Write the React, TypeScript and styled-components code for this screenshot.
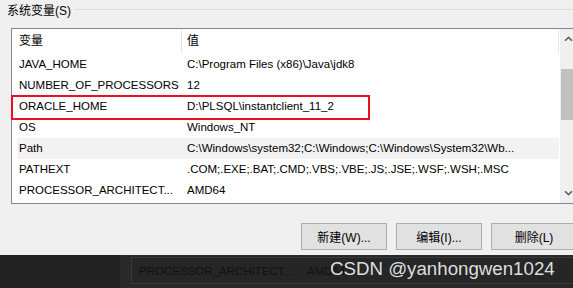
import { FC } from 'react';
import styled, { createGlobalStyle } from 'styled-components';

const GlobalStyle = createGlobalStyle`
  body {
    margin: 0;
    background: #f0f0f0;
  }
`;

interface EnvVar {
  name: string;
  value: string;
  marked?: boolean;
  hot?: boolean;
}

const vars: EnvVar[] = [
  { name: 'JAVA_HOME', value: 'C:\\Program Files (x86)\\Java\\jdk8' },
  { name: 'NUMBER_OF_PROCESSORS', value: '12' },
  { name: 'ORACLE_HOME', value: 'D:\\PLSQL\\instantclient_11_2', marked: true },
  { name: 'OS', value: 'Windows_NT' },
  { name: 'Path', value: 'C:\\Windows\\system32;C:\\Windows;C:\\Windows\\System32\\Wb...', hot: true },
  { name: 'PATHEXT', value: '.COM;.EXE;.BAT;.CMD;.VBS;.VBE;.JS;.JSE;.WSF;.WSH;.MSC' },
  { name: 'PROCESSOR_ARCHITECT...', value: 'AMD64' },
];

const Chevron: FC<{ down?: boolean }> = ({ down }) => (
  <svg width="9" height="6" viewBox="0 0 9 6">
    <polyline
      points={down ? '1,1.2 4.5,4.6 8,1.2' : '1,4.8 4.5,1.4 8,4.8'}
      fill="none"
      stroke="#606060"
      strokeWidth="1.6"
    />
  </svg>
);

const App: FC = () => {
  return (
    <Page>
      <GlobalStyle />
      <GroupTitle>
        <span>系统变量(S)</span>
      </GroupTitle>
      <ListBox>
        <ListContent>
          <HeaderRow>
            <HeaderCell $width={170} $pad={7}>变量</HeaderCell>
            <HeaderCell $width={377} $pad={5}>值</HeaderCell>
          </HeaderRow>
          {vars.map(v => (
            <Row key={v.name} $hot={v.hot} $marked={v.marked}>
              <NameCell>{v.name}</NameCell>
              <ValueCell>{v.value}</ValueCell>
            </Row>
          ))}
        </ListContent>
        <ScrollBar>
          <ArrowButton>
            <Chevron />
          </ArrowButton>
          <Track>
            <Thumb />
          </Track>
          <ArrowButton>
            <Chevron down />
          </ArrowButton>
        </ScrollBar>
      </ListBox>
      <ButtonRow>
        <Button>新建(W)...</Button>
        <Button>编辑(I)...</Button>
        <Button>删除(L)</Button>
      </ButtonRow>
      <Footer>
        <FooterSide />
        <FooterMain>
          <FooterBox>
            <FooterCell $width={169} $pad={7}>PROCESSOR_ARCHITECT...</FooterCell>
            <FooterCell $pad={6}>AMD64</FooterCell>
          </FooterBox>
        </FooterMain>
        <Watermark>CSDN @yanhongwen1024</Watermark>
      </Footer>
    </Page>
  );
};

export default App;

const Page = styled.div`
  position: relative;
  width: 573px;
  height: 288px;
  overflow: hidden;
  display: flex;
  flex-direction: column;
  background: #f0f0f0;
  color: #000;
  font-family: "Liberation Sans", "Noto Sans CJK SC", sans-serif;
  font-size: 11.5px;
`;

const GroupTitle = styled.div`
  display: flex;
  height: 18px;
  margin-top: 2px;
  padding-left: 7px;
  line-height: 18px;
  font-size: 12px;
  gap: 3px;

  &::after {
    content: '';
    flex: 1;
    margin-top: 7px;
    height: 0;
    border-top: 1px solid #dcdcdc;
  }
`;

const ListBox = styled.div`
  display: flex;
  flex-shrink: 0;
  width: 565px;
  height: 174px;
  margin: 8px 0 0 11px;
  border: 1px solid #828790;
  background: #fff;
`;

const ListContent = styled.div`
  width: 548px;
  display: flex;
  flex-direction: column;
`;

const HeaderRow = styled.div`
  display: flex;
  height: 25px;
  padding-top: 1px;
  box-sizing: border-box;
`;

const HeaderCell = styled.div<{ $width: number; $pad: number }>`
  width: ${p => p.$width}px;
  height: 23px;
  line-height: 23px;
  padding-left: ${p => p.$pad}px;
  box-sizing: border-box;
  border-right: 1px solid #e5e5e5;
  font-size: 12px;
`;

const Row = styled.div<{ $hot?: boolean; $marked?: boolean }>`
  position: relative;
  display: flex;
  width: 542px;
  height: 21px;
  margin-left: 5px;
  line-height: 21px;
  white-space: nowrap;
  background: ${p => (p.$hot ? '#f2f2f2' : 'transparent')};

  &::after {
    content: '';
    display: ${p => (p.$marked ? 'block' : 'none')};
    position: absolute;
    left: -6px;
    top: -1px;
    width: 359px;
    height: 25px;
    box-sizing: border-box;
    border: 2px solid #e81123;
  }
`;

const NameCell = styled.div`
  width: 164px;
  padding-left: 2px;
  box-sizing: border-box;
  overflow: hidden;
`;

const ValueCell = styled.div`
  flex: 1;
  padding-left: 6px;
  overflow: hidden;
`;

const ScrollBar = styled.div`
  width: 17px;
  display: flex;
  flex-direction: column;
  background: #f0f0f0;
`;

const ArrowButton = styled.div`
  height: 20px;
  display: flex;
  align-items: center;
  justify-content: center;
`;

const Track = styled.div`
  flex: 1;
  padding: 20px 1px 0 1px;
`;

const Thumb = styled.div`
  height: 51px;
  background: #c1c1c1;
`;

const ButtonRow = styled.div`
  display: flex;
  gap: 9px;
  margin: 19px 0 0 301px;
`;

const Button = styled.div`
  width: 86px;
  height: 27px;
  box-sizing: border-box;
  flex-shrink: 0;
  display: flex;
  align-items: center;
  justify-content: center;
  background: #e1e1e1;
  border: 1px solid #adadad;
  font-size: 12px;
`;

const Footer = styled.div`
  display: flex;
  height: 33px;
  margin-top: auto;
  background: #292929;
`;

const FooterSide = styled.div`
  width: 120px;
  background: #222;
`;

const FooterMain = styled.div`
  flex: 1;
  padding: 2px 0 4px 11px;
`;

const FooterBox = styled.div`
  display: flex;
  height: 100%;
  box-sizing: border-box;
  border: 1px solid #3a3a3a;
  border-right: none;
  align-items: center;
  background: #262626;
`;

const FooterCell = styled.div<{ $width?: number; $pad: number }>`
  width: ${p => (p.$width ? `${p.$width}px` : 'auto')};
  padding-left: ${p => p.$pad}px;
  box-sizing: border-box;
  color: #121212;
  white-space: nowrap;
`;

const Watermark = styled.div`
  position: absolute;
  left: 330px;
  bottom: 8px;
  line-height: 22px;
  font-family: "Liberation Sans", sans-serif;
  font-size: 18.7px;
  color: rgba(240, 240, 240, 0.92);
  white-space: nowrap;
`;
